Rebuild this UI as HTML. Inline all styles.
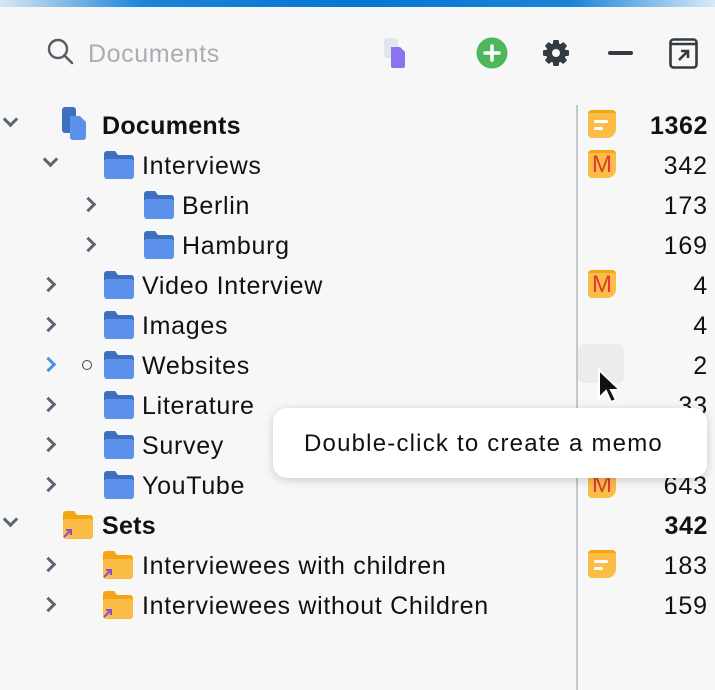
<!DOCTYPE html>
<html><head><meta charset="utf-8"><style>
*{margin:0;padding:0;box-sizing:border-box}
body{width:715px;height:690px;background:#f7f7f7;font-family:"Liberation Sans",Arial,sans-serif;position:relative;overflow:hidden;color:#111}
.bar{position:absolute;left:0;top:0;width:715px;height:7px;background:linear-gradient(90deg,#d6e8f6 0%,#1b84d8 20%,#0676d2 50%,#1b84d8 80%,#dbe9f5 100%)}
.a{position:absolute}
.t{position:absolute;font-size:25px;letter-spacing:0.7px;line-height:40px;height:40px;white-space:nowrap;margin-top:1px}
.b{font-weight:bold;letter-spacing:0.3px}
.n{position:absolute;right:7px;font-size:25px;letter-spacing:0.9px;line-height:40px;text-align:right;margin-top:1px}
.chev{position:absolute;width:11px;height:11px;border-right:3px solid #5b6670;border-bottom:3px solid #5b6670}
.r{transform:rotate(-45deg)}
.d{transform:rotate(45deg)}
.memo{position:absolute;width:28px;height:28px;background:#fbbd45;border-radius:4px 4px 9px 4px;border-top:3px solid #f3a514}
.memo i{position:absolute;left:6px;height:3px;background:#fff;border-radius:2px}
.memo b{position:absolute;left:0;width:28px;top:-3px;text-align:center;color:#e0393a;font-size:24px;line-height:30px;font-weight:normal}
</style></head><body>
<div class="bar"></div>
<svg class="a" style="left:46px;top:37px" width="30" height="30" viewBox="0 0 30 30"><circle cx="12" cy="12" r="9" fill="none" stroke="#555d66" stroke-width="2.4"/><line x1="18.5" y1="18.5" x2="26" y2="26" stroke="#555d66" stroke-width="2.6" stroke-linecap="round"/></svg>
<div class="t" style="left:88px;top:33px;color:#a9adb2;font-size:25px;letter-spacing:0.6px">Documents</div>
<svg class="a" style="left:384px;top:38px" width="28" height="30"><rect x="0" y="0" width="14" height="20" rx="3" fill="#e1e5ee"/><path d="M7 9h9l5 5v14a2 2 0 0 1-2 2H9a2 2 0 0 1-2-2z" fill="#8b73f0"/></svg>
<svg class="a" style="left:476px;top:37px" width="32" height="32"><circle cx="16" cy="16" r="15.5" fill="#4db75a"/><path d="M16 9v14M9 16h14" stroke="#fff" stroke-width="3.5" stroke-linecap="round"/></svg>
<svg class="a" style="left:540px;top:37px" width="32" height="32" viewBox="0 0 32 32"><g fill="#333a42"><circle cx="16" cy="16" r="10"/><rect x="13" y="3" width="6" height="26" rx="1.5"/><rect x="13" y="3" width="6" height="26" rx="1.5" transform="rotate(45 16 16)"/><rect x="13" y="3" width="6" height="26" rx="1.5" transform="rotate(90 16 16)"/><rect x="13" y="3" width="6" height="26" rx="1.5" transform="rotate(135 16 16)"/></g><circle cx="16" cy="16" r="4" fill="#f7f7f7"/></svg>
<div class="a" style="left:608px;top:51px;width:25px;height:4px;background:#333a42;border-radius:2px"></div>
<svg class="a" style="left:669px;top:38px" width="30" height="32"><rect x="1.5" y="1.5" width="26" height="28" rx="3" fill="none" stroke="#333a42" stroke-width="2.6"/><line x1="1.5" y1="6" x2="27.5" y2="6" stroke="#333a42" stroke-width="2.6"/><path d="M10 22l9-9M12 13h7v7" fill="none" stroke="#333a42" stroke-width="2.6"/></svg>
<div class="a" style="left:576px;top:105px;width:2px;height:585px;background:#c4c7cb"></div>
<div class="a" style="left:578px;top:344px;width:46px;height:39px;background:#ececec;border-radius:6px"></div>

<div class="chev d" style="left:5px;top:114px"></div>
<svg class="a" style="left:62px;top:107px" width="30" height="34"><rect x="0" y="0" width="14" height="26" rx="3" fill="#3f6fbf"/><path d="M8 9h10l6 6v15a3 3 0 0 1-3 3H11a3 3 0 0 1-3-3z" fill="#5b91ea"/></svg>
<div class="t b" style="left:102px;top:105px">Documents</div>
<div class="memo" style="left:588px;top:110px"><i style="top:7px;width:14px"></i><i style="top:14px;width:9px"></i></div>
<div class="n b" style="top:105px;letter-spacing:0.6px">1362</div>

<div class="chev d" style="left:45px;top:154px"></div>
<div class="t" style="left:142px;top:145px">Interviews</div>
<div class="memo" style="left:588px;top:150px"><b>M</b></div>
<div class="n" style="top:145px">342</div>

<div class="chev r" style="left:83px;top:199px"></div>
<div class="t" style="left:182px;top:185px">Berlin</div>
<div class="n" style="top:185px">173</div>

<div class="chev r" style="left:83px;top:239px"></div>
<div class="t" style="left:182px;top:225px">Hamburg</div>
<div class="n" style="top:225px">169</div>

<div class="chev r" style="left:43px;top:279px"></div>
<div class="t" style="left:142px;top:265px">Video Interview</div>
<div class="memo" style="left:588px;top:270px"><b>M</b></div>
<div class="n" style="top:265px">4</div>

<div class="chev r" style="left:43px;top:319px"></div>
<div class="t" style="left:142px;top:305px">Images</div>
<div class="n" style="top:305px">4</div>

<div class="chev r" style="left:43px;top:359px;border-color:#4b8fe6"></div>
<div class="a" style="left:82px;top:360px;width:10px;height:10px;border:1.8px solid #444;border-radius:50%"></div>
<div class="t" style="left:142px;top:345px">Websites</div>
<div class="n" style="top:345px">2</div>

<div class="chev r" style="left:43px;top:399px"></div>
<div class="t" style="left:142px;top:385px">Literature</div>
<div class="n" style="top:385px">33</div>

<div class="chev r" style="left:43px;top:439px"></div>
<div class="t" style="left:142px;top:425px">Survey</div>

<div class="chev r" style="left:43px;top:479px"></div>
<div class="t" style="left:142px;top:465px">YouTube</div>
<div class="memo" style="left:588px;top:470px"><b>M</b></div>
<div class="n" style="top:465px">643</div>

<div class="chev d" style="left:5px;top:514px"></div>
<div class="t b" style="left:102px;top:505px">Sets</div>
<div class="n b" style="top:505px;letter-spacing:0.6px">342</div>

<div class="chev r" style="left:43px;top:559px"></div>
<div class="t" style="left:142px;top:545px">Interviewees with children</div>
<div class="memo" style="left:588px;top:550px"><i style="top:7px;width:14px"></i><i style="top:14px;width:9px"></i></div>
<div class="n" style="top:545px">183</div>

<div class="chev r" style="left:43px;top:599px"></div>
<div class="t" style="left:142px;top:585px">Interviewees without Children</div>
<div class="n" style="top:585px">159</div>

<svg width="0" height="0" style="position:absolute"><defs>
<g id="fb"><path d="M0 3a3 3 0 0 1 3-3h8l3 4h13a3 3 0 0 1 3 3v4H0z" fill="#3f6fbf"/><rect x="0" y="8" width="30" height="20" rx="3" fill="#5b91ea"/></g>
<g id="fo"><path d="M0 3a3 3 0 0 1 3-3h8l3 4h13a3 3 0 0 1 3 3v4H0z" fill="#f3a514"/><rect x="0" y="8" width="30" height="20" rx="3" fill="#fbbd45"/><path d="M1 26l7-7M3 19h5v5" stroke="#8a4fd0" stroke-width="2" fill="none"/></g>
</defs></svg>
<svg class="a" style="left:104px;top:151px" width="30" height="28"><use href="#fb"/></svg>
<svg class="a" style="left:144px;top:191px" width="30" height="28"><use href="#fb"/></svg>
<svg class="a" style="left:144px;top:231px" width="30" height="28"><use href="#fb"/></svg>
<svg class="a" style="left:104px;top:271px" width="30" height="28"><use href="#fb"/></svg>
<svg class="a" style="left:104px;top:311px" width="30" height="28"><use href="#fb"/></svg>
<svg class="a" style="left:104px;top:351px" width="30" height="28"><use href="#fb"/></svg>
<svg class="a" style="left:104px;top:391px" width="30" height="28"><use href="#fb"/></svg>
<svg class="a" style="left:104px;top:431px" width="30" height="28"><use href="#fb"/></svg>
<svg class="a" style="left:104px;top:471px" width="30" height="28"><use href="#fb"/></svg>
<svg class="a" style="left:63px;top:511px" width="30" height="30"><use href="#fo"/></svg>
<svg class="a" style="left:103px;top:551px" width="30" height="30"><use href="#fo"/></svg>
<svg class="a" style="left:103px;top:591px" width="30" height="30"><use href="#fo"/></svg>

<svg class="a" style="left:597px;top:368px" width="24" height="38"><path d="M2 2v28l7-7 5 11 5-2-5-10h9z" fill="#111" stroke="#fff" stroke-width="2"/></svg>

<div class="a" style="left:273px;top:408px;width:434px;height:70px;background:#fff;border-radius:14px;box-shadow:0 2px 10px rgba(0,0,0,.18)"></div>
<div class="t" style="left:304px;top:423px;font-size:24px;letter-spacing:1.2px">Double-click to create a memo</div>
</body></html>
